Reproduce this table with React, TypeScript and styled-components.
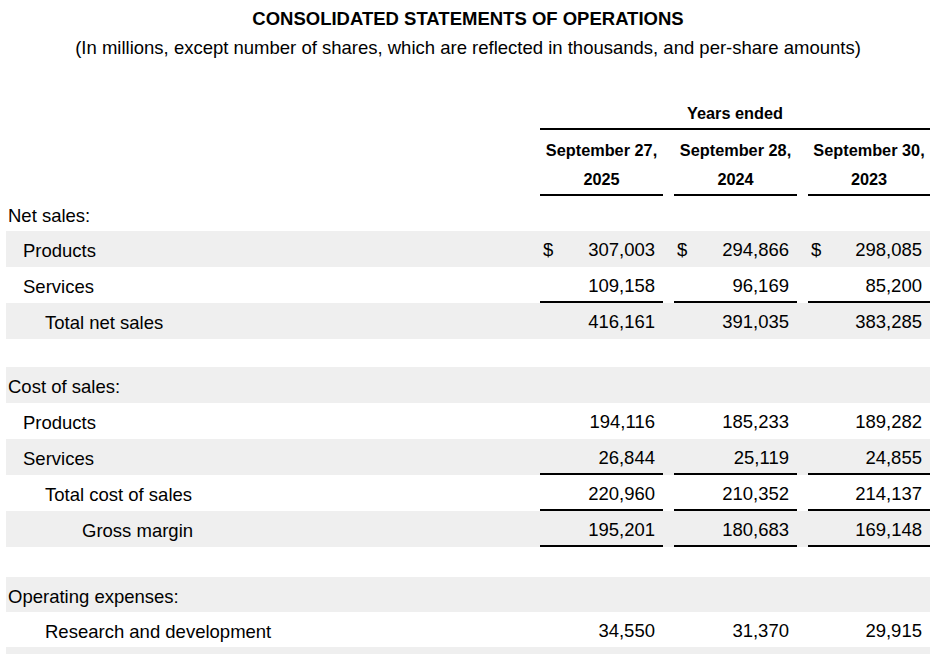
import React from "react";
import styled, { createGlobalStyle } from "styled-components";

const Global = createGlobalStyle`
  html, body { margin: 0; padding: 0; background: #fff; }
  body { font-family: "Liberation Sans", Arial, sans-serif; color: #000; }
`;

const Page = styled.div`
  width: 936px;
  padding: 5px 6px 0 6px;
  box-sizing: border-box;
`;

const Title = styled.h1`
  margin: 0;
  font-size: 18.5px;
  font-weight: 700;
  line-height: 28px;
  text-align: center;
`;

const Subtitle = styled.p`
  margin: 1px 0 0 0;
  font-size: 18.5px;
  line-height: 28px;
  text-align: center;
`;

const Grid = styled.div`
  display: grid;
  grid-template-columns: 523px 123px 123px 122px;
  column-gap: 11px;
`;

const HeaderTop = styled(Grid)`
  margin-top: 36px;
`;

const YearsEnded = styled.div`
  grid-column: 2 / 5;
  font-size: 16.3px;
  font-weight: 700;
  text-align: center;
  line-height: 30px;
  border-bottom: 2px solid #000;
`;

const DateCell = styled.div`
  font-size: 16.3px;
  font-weight: 700;
  text-align: center;
  line-height: 29px;
  padding-top: 6px;
  border-bottom: 2px solid #000;
`;

const Row = styled(Grid)<{ $shade?: boolean; $h?: number }>`
  height: ${(p) => p.$h ?? 36}px;
  background: ${(p) => (p.$shade ? "#efefef" : "transparent")};
  font-size: 18.5px;
  align-items: stretch;
`;

const Label = styled.div<{ $indent: number }>`
  display: flex;
  align-items: center;
  padding-top: 4px;
  padding-left: ${(p) => p.$indent}px;
  white-space: nowrap;
`;

const Amount = styled.div<{ $rule?: boolean }>`
  display: flex;
  align-items: center;
  justify-content: space-between;
  padding: 4px 8px 0 3px;
  box-sizing: border-box;
  border-bottom: ${(p) => (p.$rule ? "2px solid #000" : "2px solid transparent")};
`;

type Line = {
  label?: string;
  indent?: number;
  values?: string[];
  dollar?: boolean;
  rule?: boolean;
  shade?: boolean;
  h?: number;
};

const lines: Line[] = [
  { label: "Net sales:", indent: 2, h: 35 },
  { label: "Products", indent: 17, values: ["307,003", "294,866", "298,085"], dollar: true, shade: true },
  { label: "Services", indent: 17, values: ["109,158", "96,169", "85,200"], rule: true },
  { label: "Total net sales", indent: 39, values: ["416,161", "391,035", "383,285"], shade: true },
  { h: 28 },
  { label: "Cost of sales:", indent: 2, shade: true },
  { label: "Products", indent: 17, values: ["194,116", "185,233", "189,282"] },
  { label: "Services", indent: 17, values: ["26,844", "25,119", "24,855"], rule: true, shade: true },
  { label: "Total cost of sales", indent: 39, values: ["220,960", "210,352", "214,137"], rule: true },
  { label: "Gross margin", indent: 76, values: ["195,201", "180,683", "169,148"], rule: true, shade: true },
  { h: 30 },
  { label: "Operating expenses:", indent: 2, shade: true, h: 35 },
  { label: "Research and development", indent: 39, values: ["34,550", "31,370", "29,915"], h: 35 },
  { shade: true },
];

const dates = [
  ["September 27,", "2025"],
  ["September 28,", "2024"],
  ["September 30,", "2023"],
];

export default function App() {
  return (
    <>
      <Global />
      <Page>
        <Title>CONSOLIDATED STATEMENTS OF OPERATIONS</Title>
        <Subtitle>
          (In millions, except number of shares, which are reflected in thousands, and per-share amounts)
        </Subtitle>
        <HeaderTop>
          <div />
          <YearsEnded>Years ended</YearsEnded>
        </HeaderTop>
        <Grid>
          <div />
          {dates.map(([a, b]) => (
            <DateCell key={a}>
              {a}
              <br />
              {b}
            </DateCell>
          ))}
        </Grid>
        {lines.map((l, i) => (
          <Row key={i} $shade={l.shade} $h={l.h}>
            <Label $indent={l.indent ?? 0}>{l.label ?? ""}</Label>
            {[0, 1, 2].map((c) => (
              <Amount key={c} $rule={l.rule}>
                <span>{l.dollar ? "$" : ""}</span>
                <span>{l.values ? l.values[c] : ""}</span>
              </Amount>
            ))}
          </Row>
        ))}
      </Page>
    </>
  );
}
